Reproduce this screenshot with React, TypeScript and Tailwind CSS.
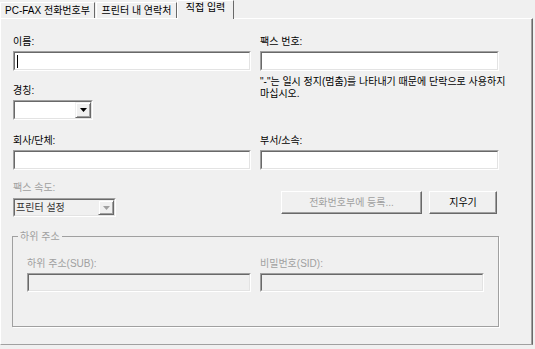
import type { ReactNode } from "react";
import clsx from "clsx";

function Sunken({
  className,
  disabled,
  children,
}: {
  className?: string;
  disabled?: boolean;
  children?: ReactNode;
}) {
  return (
    <div
      className={clsx(
        "border border-t-[#a0a0a0] border-l-[#a0a0a0] border-b-white border-r-white",
        className
      )}
    >
      <div
        className={clsx(
          "flex h-full items-center border border-t-[#696969] border-l-[#696969] border-b-[#e3e3e3] border-r-[#e3e3e3]",
          disabled ? "bg-[#f0f0f0]" : "bg-white"
        )}
      >
        {children}
      </div>
    </div>
  );
}

function Arrow({ disabled }: { disabled?: boolean }) {
  return (
    <div className="flex h-full w-[16px] items-center justify-center border border-t-[#f0f0f0] border-l-[#f0f0f0] border-b-[#696969] border-r-[#696969] bg-[#f0f0f0] shadow-[inset_1px_1px_0_#fff,inset_-1px_-1px_0_#a0a0a0]">
      <svg width="7" height="4" viewBox="0 0 7 4">
        <path d="M0 0h7L3.5 4z" fill={disabled ? "#a0a0a0" : "#000"} />
      </svg>
    </div>
  );
}

function Label({ text, grey }: { text: string; grey?: boolean }) {
  return (
    <div
      className={clsx(
        "h-[13px] whitespace-nowrap leading-[13px]",
        grey ? "text-[#a0a0a0]" : "text-black"
      )}
    >
      {text}
    </div>
  );
}

function Button({
  text,
  disabled,
  className,
}: {
  text: string;
  disabled?: boolean;
  className?: string;
}) {
  return (
    <div
      className={clsx(
        "flex h-[23px] items-center justify-center border border-t-white border-l-white border-b-[#696969] border-r-[#696969] shadow-[inset_-1px_-1px_0_#a0a0a0]",
        disabled ? "text-[#a0a0a0]" : "text-black",
        className
      )}
    >
      {text}
    </div>
  );
}

export default function App() {
  return (
    <div className="h-[349px] w-[535px] overflow-hidden bg-[#f0f0f0] font-[family-name:'Liberation_Sans','Noto_Sans_CJK_KR',sans-serif] text-[10px] text-black">
      {/* tabs */}
      <div className="flex h-[18px] items-end">
        <div className="flex h-[16px] w-[95px] items-center justify-center border-t border-l border-r border-t-white border-l-white border-r-[#696969] leading-none">
          PC-FAX 전화번호부
        </div>
        <div className="ml-[1px] flex h-[16px] w-[81px] items-center justify-center border-t border-l border-r border-t-white border-l-white border-r-[#696969] leading-none">
          프린터 내 연락처
        </div>
        <div className="relative z-10 -mb-px flex h-[19px] w-[57px] items-start justify-center border-t border-l border-r border-t-white border-l-white border-r-[#696969] bg-[#f0f0f0] pt-[2px] leading-[10px]">
          직접 입력
        </div>
      </div>

      {/* panel */}
      <div className="h-[327px] w-[533px] border-t border-l border-r border-b border-t-white border-l-white border-r-[#696969] border-b-[#a0a0a0] pt-[16px] pl-[12px] shadow-[inset_-1px_0_0_#a0a0a0]">
        <div className="flex gap-[9px]">
          <div className="flex w-[238px] flex-col">
            <Label text="이름:" />
            <Sunken className="mt-[3px] h-[20px] w-[238px]">
              <span className="ml-[2px] h-[13px] w-px bg-black" />
            </Sunken>
            <div className="mt-[13px]">
              <Label text="경칭:" />
            </div>
            <Sunken className="mt-[3px] h-[20px] w-[80px]">
              <div className="flex-1" />
              <Arrow />
            </Sunken>
            <div className="mt-[14px]">
              <Label text="회사/단체:" />
            </div>
            <Sunken className="mt-[3px] h-[20px] w-[238px]" />
            <div className="mt-[11px]">
              <Label text="팩스 속도:" grey />
            </div>
            <Sunken className="mt-[4px] h-[19px] w-[103px]" disabled>
              <span className="flex-1 pl-[1px] leading-none text-[#333]">프린터 설정</span>
              <Arrow disabled />
            </Sunken>
          </div>

          <div className="flex w-[239px] flex-col">
            <Label text="팩스 번호:" />
            <Sunken className="mt-[3px] h-[20px] w-[239px]" />
            <div className="mt-[5px] whitespace-nowrap leading-[12px]">
              <div>"-"는 일시 정지(멈춤)를 나타내기 때문에 단락으로 사용하지</div>
              <div>마십시오.</div>
            </div>
            <div className="mt-[34px]">
              <Label text="부서/소속:" />
            </div>
            <Sunken className="mt-[3px] h-[20px] w-[239px]" />
            <div className="mt-[21px] flex gap-[7px] pl-[21px]">
              <Button text="전화번호부에 등록..." disabled className="w-[141px]" />
              <Button text="지우기" className="w-[68px]" />
            </div>
          </div>
        </div>

        <fieldset className="mt-[13px] -ml-px h-[97px] w-[487px] border border-[#a0a0a0] shadow-[1px_1px_0_#fff]">
          <legend className="ml-[5px] px-[2px] leading-[13px] text-[#a0a0a0]">
            하위 주소
          </legend>
          <div className="mt-[14px] flex gap-[9px] pl-[14px]">
            <div className="flex w-[224px] flex-col">
              <Label text="하위 주소(SUB):" grey />
              <Sunken className="mt-[3px] h-[19px] w-[224px]" disabled />
            </div>
            <div className="flex w-[224px] flex-col">
              <Label text="비밀번호(SID):" grey />
              <Sunken className="mt-[3px] h-[19px] w-[224px]" disabled />
            </div>
          </div>
        </fieldset>
      </div>
    </div>
  );
}
